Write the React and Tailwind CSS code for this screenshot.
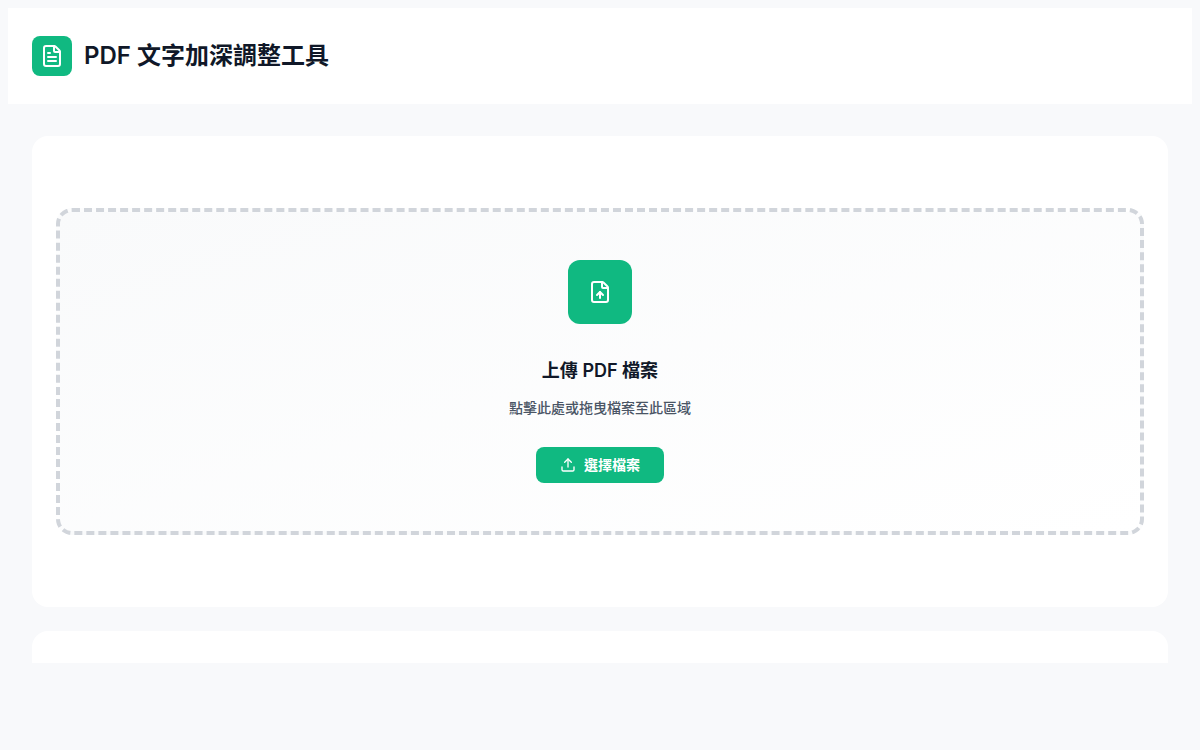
import React from 'react';
import { FileText, FileUp, Upload } from 'lucide-react';

export default function App() {
  return (
    <div lang="zh-TW" className="min-h-screen bg-[#f8f9fb] p-2 font-[family-name:Inter,Noto_Sans_CJK_TC,sans-serif] text-gray-900">
      <header className="flex h-24 items-center gap-3 bg-white px-6">
        <span className="flex size-10 items-center justify-center rounded-lg bg-[#10b981] text-white">
          <FileText size={24} aria-hidden="true" />
        </span>
        <h1 className="text-2xl font-semibold">PDF 文字加深調整工具</h1>
      </header>
      <main className="flex flex-col gap-6 px-6 pt-8">
        <section className="rounded-2xl bg-white px-6 py-18">
          <div className="flex flex-col items-center rounded-2xl border-4 border-dashed border-[#d1d5db] bg-linear-to-br from-[#f9fafb] to-white px-6 py-12">
            <span className="flex size-16 items-center justify-center rounded-xl bg-[#10b981] text-white">
              <FileUp size={24} aria-hidden="true" />
            </span>
            <h2 className="mt-8 text-lg leading-[30px] font-semibold">上傳 PDF 檔案</h2>
            <p className="mt-2.5 text-sm leading-[23px] font-medium text-gray-600">點擊此處或拖曳檔案至此區域</p>
            <button type="button" className="mt-7 flex h-9 items-center gap-2 rounded-lg bg-[#10b981] px-6 text-sm font-bold text-white">
              <Upload size={16} aria-hidden="true" />
              選擇檔案
            </button>
          </div>
        </section>
        <section className="h-8 rounded-t-2xl bg-white" />
      </main>
    </div>
  );
}
